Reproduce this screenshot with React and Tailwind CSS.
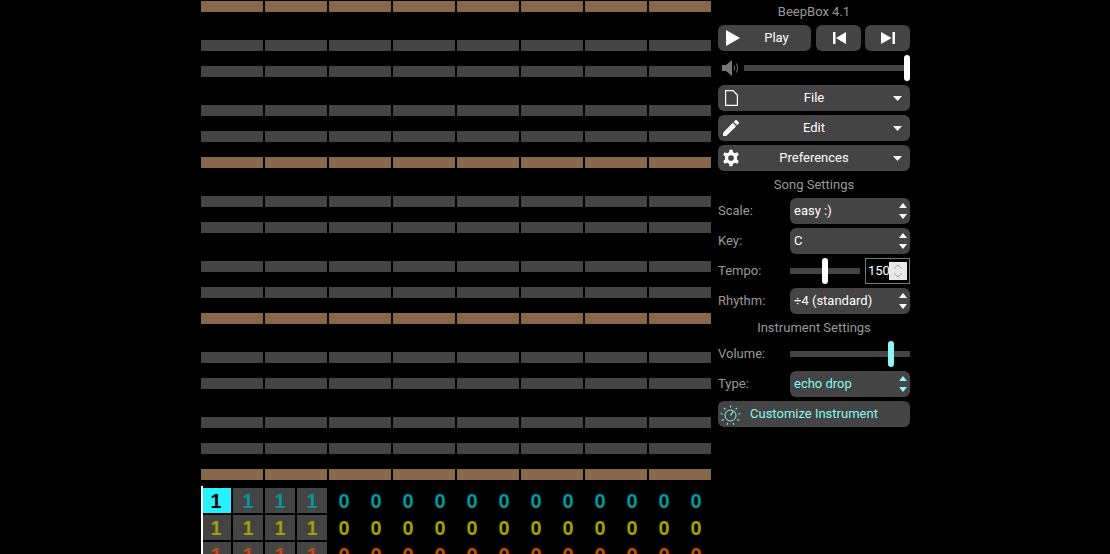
const rowsOn = [0,3,5,8,10,12,15,17,20,22,24,27,29,32,34,36];
const brown = [0,12,24,36];
const font = { fontFamily: 'Roboto, "Liberation Sans", sans-serif' };
const ticks = [-120, -80, -40, 0, 40, 80, 120, 160, 200];

function Updown({ cyan }) {
  const c = cyan ? "#8af7f3" : "#ffffff";
  return (
    <svg width="8" height="16" viewBox="0 0 8 16" className="absolute right-[3px] top-[5px]">
      <path d="M4 0 L8 5 H0 Z" fill={c} />
      <path d="M4 16 L0 11 H8 Z" fill={c} />
    </svg>
  );
}
function Caret() {
  return (
    <svg width="9" height="5" viewBox="0 0 9 5" className="absolute right-[8px] top-[11px]">
      <path d="M0 0 H9 L4.5 5 Z" fill="#fff" />
    </svg>
  );
}
function Menu({ label, icon }) {
  return (
    <div className="relative h-[26px] rounded-[6px] bg-[#444444] flex items-center justify-center text-[13px] font-[450] text-white">
      {icon}
      {label}
      <Caret />
    </div>
  );
}
function Row({ label, children }) {
  return (
    <div className="flex h-[26px] items-center">
      <div className="w-[72px] text-[13px] text-[#999999]">{label}</div>
      <div className="w-[120px] h-full flex items-center">{children}</div>
    </div>
  );
}
function Select({ text, cyan }) {
  return (
    <div className={"relative w-full h-full rounded-[6px] bg-[#444444] flex items-center pl-[4px] text-[13px] font-[450] " + (cyan ? "text-[#8af7f3]" : "text-white")}>
      {text}
      <Updown cyan={cyan} />
    </div>
  );
}

function Grid() {
  return (
    <div className="flex flex-col gap-y-[2px] pt-px pl-px">
      {Array.from({ length: 37 }).map((_, k) => (
        <div key={k} className="grid grid-cols-[repeat(8,62px)] gap-x-[2px] h-[11px]">
          {rowsOn.includes(k) &&
            Array.from({ length: 8 }).map((_, i) => (
              <div key={i} className={brown.includes(k) ? "bg-[#88684a]" : "bg-[#444444]"} />
            ))}
        </div>
      ))}
    </div>
  );
}

function ChannelRow({ dim, first }) {
  return (
    <div className="grid grid-cols-[repeat(16,30px)] gap-x-[2px] h-[25px] shrink-0">
      {Array.from({ length: 16 }).map((_, i) => {
        const on = i < 4;
        const sel = first && i === 0;
        return (
          <div
            key={i}
            className={
              "flex items-center justify-center text-[20px] font-bold leading-none " +
              (sel ? "bg-[#25f3ff] text-black " : on ? "bg-[#444444] " : "")
            }
            style={sel ? { fontFamily: '"Liberation Sans", sans-serif' } : { fontFamily: '"Liberation Sans", sans-serif', color: dim }}
          >
            {on ? "1" : "0"}
          </div>
        );
      })}
    </div>
  );
}

export default function App() {
  return (
    <div className="h-[554px] w-full overflow-hidden bg-black flex pl-[200px]" style={font}>
      <div className="w-[512px] shrink-0">
        <Grid />
        <div className="relative mt-[6px] pt-[2px] pl-px flex flex-col gap-y-[2px]">
          <div className="absolute left-px top-0 w-[2px] h-[80px] bg-white" />
          <ChannelRow dim="#0099a1" first />
          <ChannelRow dim="#a1a100" />
          <ChannelRow dim="#c75000" />
        </div>
      </div>

      <div className="w-[192px] ml-[6px] shrink-0 flex flex-col">
        <div className="h-[21px] pt-[3px] text-center text-[13px] leading-[17px] text-[#999999]">BeepBox 4.1</div>
        <div className="mt-[4px] flex gap-[4px] h-[26px]">
          <div className="relative w-[93px] rounded-[6px] bg-[#444444] flex items-center justify-center pl-[24px] text-[13px] font-[450] text-white">
            <svg width="14" height="16" viewBox="0 0 14 16" className="absolute left-[8px] top-[5px]"><path d="M0 0 L14 8 L0 16 Z" fill="#fff" /></svg>
            Play
          </div>
          <div className="w-[45px] ml-[1px] rounded-[6px] bg-[#444444] flex items-center justify-center pl-[1px]">
            <svg width="13" height="12" viewBox="0 0 13 12"><path d="M0 0 H2.5 V12 H0 Z M3 6 L13 0 V12 Z" fill="#fff" /></svg>
          </div>
          <div className="w-[45px] rounded-[6px] bg-[#444444] flex items-center justify-center pl-[1px]">
            <svg width="14" height="12" viewBox="0 0 14 12"><path d="M14 0 H11.5 V12 H14 Z M10.5 6 L0 0 V12 Z" fill="#fff" /></svg>
          </div>
        </div>
        <div className="mt-[4px] h-[26px] flex items-center">
          <svg width="18" height="16" viewBox="0 0 18 16" className="ml-[4px] mr-[4px]">
            <path d="M0 5 H4 L10 0 V16 L4 11 H0 Z" fill="#777" />
            <path d="M12 5.5 Q13.5 8 12 10.5" stroke="#777" strokeWidth="1" fill="none" />
            <path d="M14.5 3.5 Q17 8 14.5 12.5" stroke="#777" strokeWidth="1" fill="none" />
          </svg>
          <div className="relative flex-1 h-[6px] bg-[#444444]">
            <div className="absolute right-0 -top-[10px] w-[6px] h-[26px] rounded-[3px] bg-white" />
          </div>
        </div>
        <div className="mt-[4px] flex flex-col gap-[4px]">
          <Menu label="File" icon={
            <svg width="13" height="16" viewBox="0 0 13 16" className="absolute left-[7px] top-[5px]">
              <path d="M0.6 0.6 H8 L12.4 5 V15.4 H0.6 Z" fill="none" stroke="#fff" strokeWidth="1.2" />
            </svg>} />
          <Menu label="Edit" icon={
            <svg width="16" height="16" viewBox="3 3 18 18" className="absolute left-[5px] top-[5px]">
              <path d="M3 17.25V21h3.75L17.81 9.94l-3.75-3.75L3 17.25zM20.71 7.04c.39-.39.39-1.02 0-1.41l-2.34-2.34c-.39-.39-1.02-.39-1.41 0l-1.83 1.83 3.75 3.75 1.83-1.83z" fill="#fff" />
            </svg>} />
          <Menu label="Preferences" icon={
            <svg width="18" height="18" viewBox="0 0 24 24" className="absolute left-[4px] top-[4px]">
              <path fillRule="evenodd" d="M10 1 H14 L14.6 4.2 Q16.2 4.7 17.4 5.6 L20.4 4.4 L22.4 7.8 L19.9 9.9 Q20.2 12 19.9 14.1 L22.4 16.2 L20.4 19.6 L17.4 18.4 Q16.2 19.3 14.6 19.8 L14 23 H10 L9.4 19.8 Q7.8 19.3 6.6 18.4 L3.6 19.6 L1.6 16.2 L4.1 14.1 Q3.8 12 4.1 9.9 L1.6 7.8 L3.6 4.4 L6.6 5.6 Q7.8 4.7 9.4 4.2 Z M12 8.2 A3.8 3.8 0 1 0 12 15.8 A3.8 3.8 0 1 0 12 8.2 Z" fill="#fff" />
            </svg>} />
        </div>
        <div className="h-[27px] flex items-center justify-center text-[13px] text-[#999999]">Song Settings</div>
        <div className="flex flex-col gap-[4px]">
          <Row label="Scale:"><Select text="easy :)" /></Row>
          <Row label="Key:"><Select text="C" /></Row>
          <Row label="Tempo:">
            <div className="relative w-[70px] h-[6px] bg-[#444444]">
              <div className="absolute left-[32px] -top-[10px] w-[6px] h-[26px] rounded-[3px] bg-white" />
            </div>
            <div className="relative ml-[5px] w-[45px] h-full border border-[#777777] flex items-center pl-[2px] text-[13px] font-[450] text-white">
              150
              <div className="absolute right-[2px] top-[3px] w-[18px] h-[18px] bg-[#e8e8e8]">
                <svg width="18" height="18" viewBox="0 0 18 18">
                  <path d="M5 6.5 L9 3 L13 6.5" fill="none" stroke="#a0a0a0" strokeWidth="1" />
                  <path d="M5 11.5 L9 15 L13 11.5" fill="none" stroke="#a0a0a0" strokeWidth="1" />
                </svg>
              </div>
            </div>
          </Row>
          <Row label="Rhythm:"><Select text="÷4 (standard)" /></Row>
        </div>
        <div className="h-[27px] flex items-center justify-center text-[13px] text-[#999999]">Instrument Settings</div>
        <div className="flex flex-col gap-[4px]">
          <Row label="Volume:">
            <div className="relative w-[120px] h-[6px] bg-[#444444]">
              <div className="absolute left-[98px] -top-[10px] w-[6px] h-[26px] rounded-[3px] bg-[#8af7f3]" />
            </div>
          </Row>
          <Row label="Type:"><Select text="echo drop" cyan /></Row>
          <div className="relative h-[26px] rounded-[6px] bg-[#444444] flex items-center pl-[32px] text-[13px] font-[450] text-[#8af7f3]">
            <svg width="22" height="22" viewBox="0 0 22 22" className="absolute left-[2px] top-[3px]">
              <circle cx="10.5" cy="11.5" r="5.5" fill="none" stroke="#8af7f3" strokeWidth="1" />
              <path d="M10.5 11.5 L13.5 7" stroke="#8af7f3" strokeWidth="1.2" />
              {ticks.map((a) => (
                <path key={a} d="M10.5 3.5 V1.5" stroke="#8af7f3" strokeWidth="1" transform={`rotate(${a} 10.5 11.5)`} />
              ))}
            </svg>
            Customize Instrument
          </div>
        </div>
      </div>
    </div>
  );
}
